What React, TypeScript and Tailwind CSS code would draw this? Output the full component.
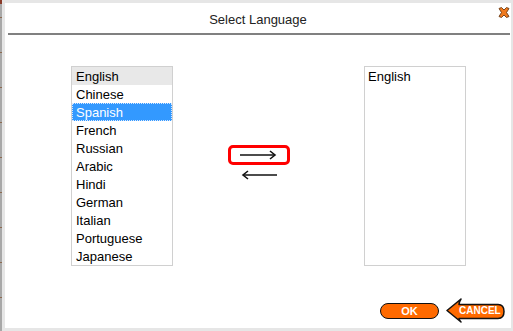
import React from "react";

const languages = [
  "English",
  "Chinese",
  "Spanish",
  "French",
  "Russian",
  "Arabic",
  "Hindi",
  "German",
  "Italian",
  "Portuguese",
  "Japanese",
];

const ticks = [17, 35, 35, 35, 35, 35, 35, 35, 35];

function CloseIcon() {
  return (
    <svg width="12" height="11" viewBox="0 0 12 11">
      <path
        d="M1 1.5 L3.5 0.5 L6 3 L8.5 0.5 L11 1.5 L8.5 5.5 L11 9.5 L8.5 10.5 L6 8 L3.5 10.5 L1 9.5 L3.5 5.5 Z"
        fill="#f07a1e"
        stroke="#6b3a12"
        strokeWidth="0.9"
        strokeLinejoin="round"
      />
    </svg>
  );
}

function CancelButton() {
  return (
    <button className="relative w-[59px] h-[25px]">
      <svg width="59" height="25" viewBox="0 0 59 25" className="absolute inset-0">
        <path
          d="M1 12.5 L15 1 Q13 4 13 6.5 L52 6.5 Q58 6.5 58 13.5 Q58 20.5 52 20.5 L13 20.5 Q13 22 15 24 Z"
          fill="#ff6a00"
          stroke="#111"
          strokeWidth="1.5"
          strokeLinejoin="round"
        />
      </svg>
      <span className="absolute left-[13px] top-[7px] text-[10px] leading-[12px] font-bold text-white">
        CANCEL
      </span>
    </button>
  );
}

export default function App() {
  return (
    <div
      className="w-[513px] h-[331px] bg-[#e6e6e6] flex overflow-hidden"
      style={{ fontFamily: '"Liberation Sans", Arial, sans-serif' }}
    >
      {/* left edge of the window behind */}
      <div className="w-[2px] h-full bg-[#a8a8a8] flex flex-col">
        <div className="h-[4px] bg-[#8a3b2a]" />
        {ticks.map((t, i) => (
          <div key={i} className="flex flex-col">
            <div style={{ height: i === 0 ? t - 4 : t - 1 }} />
            <div className="h-[1px] bg-[#8c6a50]" />
          </div>
        ))}
      </div>

      <div className="relative ml-[3px] mt-[3px] w-[506px] h-[325px] bg-white flex flex-col">
        <div className="absolute left-[493px] top-[4px]">
          <CloseIcon />
        </div>

        <div className="h-[30px] pt-[4px] flex items-center justify-center text-[13px] text-[#222]">
          Select Language
        </div>
        <div className="h-[2px] ml-[3px] mr-[1px] bg-[#808080]" />

        <div className="flex mt-[31px] ml-[66px]">
          <div className="w-[102px] h-[200px] border border-[#d0d0d0] flex flex-col text-[13px] text-black">
            {languages.map((lang) => (
              <div
                key={lang}
                className={`h-[18px] leading-[17px] px-[3px] border ${
                  lang === "English"
                    ? "bg-[#e8e8e8] border-transparent"
                    : lang === "Spanish"
                    ? "bg-[#3399ff] text-white border-dotted border-[#d8e8ff]"
                    : "border-transparent"
                }`}
              >
                {lang}
              </div>
            ))}
          </div>

          <div className="w-[191px] flex flex-col pl-[55px] pt-[79px]">
            <div className="w-[62px] h-[20px] border-[3px] border-[#ff0000] rounded-[5px] flex items-center pl-[9px]">
              <svg width="37" height="10" viewBox="0 0 37 10">
                <path d="M0 5 H35" stroke="#111" strokeWidth="1.6" />
                <path d="M30 1 L35 5 L30 9" fill="none" stroke="#111" strokeWidth="1.6" />
              </svg>
            </div>
            <div className="pl-[13px] mt-[5px]">
              <svg width="37" height="10" viewBox="0 0 37 10">
                <path d="M2 5 H36" stroke="#111" strokeWidth="1.6" />
                <path d="M7 1 L2 5 L7 9" fill="none" stroke="#111" strokeWidth="1.6" />
              </svg>
            </div>
          </div>

          <div className="w-[102px] h-[200px] border border-[#d0d0d0] text-[13px] text-black">
            <div className="h-[18px] leading-[17px] px-[2px] border border-transparent">English</div>
          </div>
        </div>

        <div className="flex justify-end items-center gap-[7px] pr-[6px] mt-[32px]">
          <button className="w-[59px] h-[16px] rounded-full bg-[#ff6a00] border-[1.5px] border-[#111] text-[11px] leading-[12px] font-bold text-white">
            OK
          </button>
          <CancelButton />
        </div>
      </div>
    </div>
  );
}
